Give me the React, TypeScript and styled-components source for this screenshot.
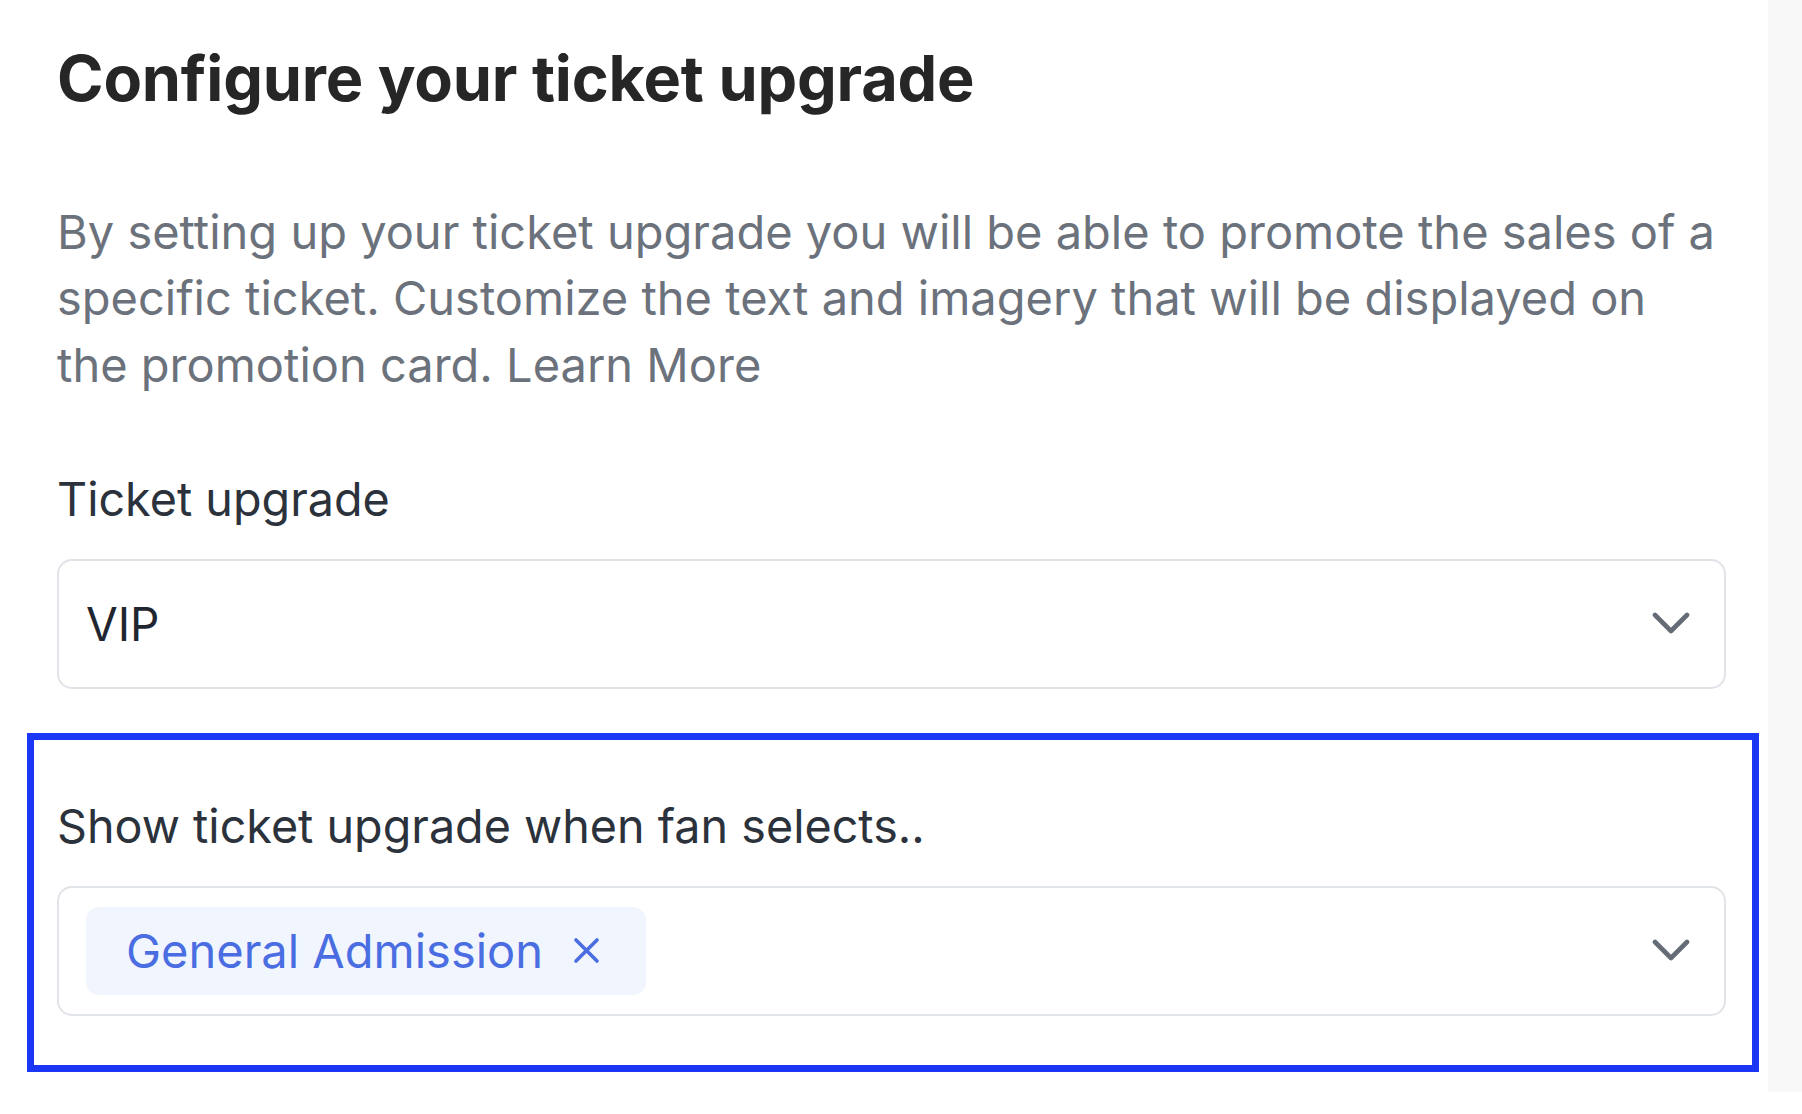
import React from 'react';
import styled, { createGlobalStyle } from 'styled-components';

const GlobalStyle = createGlobalStyle`
  html, body {
    margin: 0;
    padding: 0;
    background: #ffffff;
  }
  body {
    font-family: Inter, "Noto Sans", "Liberation Sans", sans-serif;
    -webkit-font-smoothing: antialiased;
  }
`;

const Page = styled.div`
  display: flex;
  width: 1802px;
  min-height: 1114px;
  background: #ffffff;
`;

const Main = styled.main`
  width: 1768px;
  box-sizing: border-box;
  padding: 41px 42px 0 57px;
`;

const SideStrip = styled.aside`
  width: 34px;
  height: 1092px;
  background: #f8f8f8;
`;

const Title = styled.h1`
  margin: 0;
  font-size: 63px;
  line-height: 1.2;
  font-weight: 700;
  color: #262626;
  letter-spacing: -0.2px;
`;

const Intro = styled.p`
  margin: 82px 0 0;
  font-size: 47px;
  line-height: 66.7px;
  font-weight: 400;
  color: #6b727c;
  white-space: nowrap;
`;

const Field = styled.div`
  display: flex;
  flex-direction: column;
  gap: 28px;
`;

const Label = styled.label`
  font-size: 46.7px;
  line-height: 64px;
  color: #2b323b;
`;

const Select = styled.div`
  display: flex;
  align-items: center;
  justify-content: space-between;
  box-sizing: border-box;
  height: 130px;
  padding: 0 34px 0 27px;
  border: 2px solid #e0e3e7;
  border-radius: 15px;
  background: #ffffff;
`;

const Value = styled.span`
  font-size: 46px;
  color: #1f2630;
`;

const Chip = styled.span`
  display: inline-flex;
  align-items: center;
  gap: 30px;
  height: 88px;
  padding: 0 46px 0 40px;
  border-radius: 13px;
  background: #f1f5fd;
  color: #4a6de2;
  font-size: 47px;
`;

const Highlight = styled.section`
  margin: 44px -33px 0 -30px;
  padding: 54px 26px 49px 23px;
  border: 7px solid #1b36f5;
`;

const FirstField = styled(Field)`
  margin-top: 68px;
`;

const Chevron = () => (
  <svg width="38" height="23" viewBox="0 0 38 23" fill="none">
    <polyline
      points="3,3 19,19 35,3"
      stroke="#656c76"
      strokeWidth="4.6"
      strokeLinecap="round"
      strokeLinejoin="round"
    />
  </svg>
);

const Cross = () => (
  <svg width="27" height="27" viewBox="0 0 27 27" fill="none">
    <path d="M3 3 L24 24 M24 3 L3 24" stroke="#4a6de2" strokeWidth="3.6" strokeLinecap="round" />
  </svg>
);

export default function App() {
  return (
    <Page>
      <GlobalStyle />
      <Main>
        <Title>Configure your ticket upgrade</Title>
        <Intro>
          By setting up your ticket upgrade you will be able to promote the sales of a
          <br />
          specific ticket. Customize the text and imagery that will be displayed on
          <br />
          the promotion card. Learn More
        </Intro>

        <FirstField>
          <Label>Ticket upgrade</Label>
          <Select>
            <Value>VIP</Value>
            <Chevron />
          </Select>
        </FirstField>

        <Highlight>
          <Field>
            <Label>Show ticket upgrade when fan selects..</Label>
            <Select>
              <Chip>
                General Admission
                <Cross />
              </Chip>
              <Chevron />
            </Select>
          </Field>
        </Highlight>
      </Main>
      <SideStrip />
    </Page>
  );
}
